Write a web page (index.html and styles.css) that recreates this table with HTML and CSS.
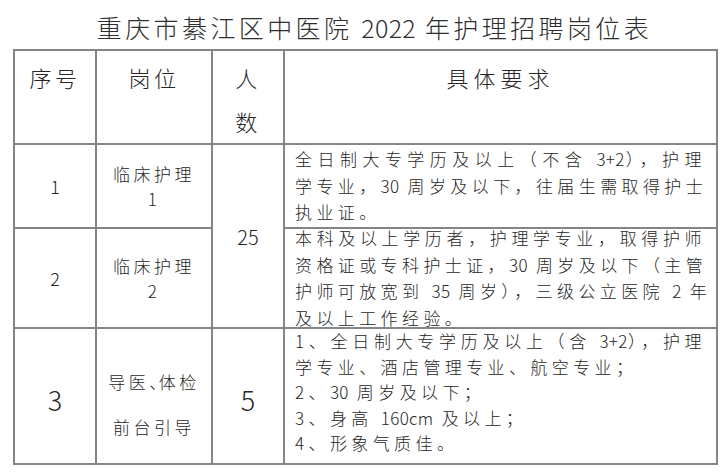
FILE: index.html
```html
<!DOCTYPE html>
<html lang="zh-CN">
<head>
<meta charset="utf-8">
<title>重庆市綦江区中医院 2022 年护理招聘岗位表</title>
<link rel="stylesheet" href="styles.css">
</head>
<body>
<h1 class="title">重庆市綦江区中医院 <span class="n">2022</span> 年护理招聘岗位表</h1>
<table class="jobs">
  <colgroup>
    <col class="c1"><col class="c2"><col class="c3"><col class="c4">
  </colgroup>
  <tr class="head">
    <th>序号</th>
    <th>岗位</th>
    <th>人<br>数</th>
    <th class="wide">具体要求</th>
  </tr>
  <tr class="r1">
    <td class="idx">1</td>
    <td class="post">临床护理<br>1</td>
    <td rowspan="2" class="count">25</td>
    <td class="req">
      <div class="box box1">
        <span class="ln">全日制大专学历及以上（不含 <span class="n">3+2</span>），护理</span>
        <span class="ln">学专业，<span class="n">30</span> 周岁及以下，往届生需取得护士</span>
        <span class="ln last">执业证。</span>
      </div>
    </td>
  </tr>
  <tr class="r2">
    <td class="idx">2</td>
    <td class="post">临床护理<br>2</td>
    <td class="req">
      <div class="box box2">
        <span class="ln">本科及以上学历者，护理学专业，取得护师</span>
        <span class="ln">资格证或专科护士证，<span class="n">30</span> 周岁及以下（主管</span>
        <span class="ln">护师可放宽到 <span class="n">35</span> 周岁），三级公立医院 <span class="n">2</span> 年</span>
        <span class="ln last">及以上工作经验。</span>
      </div>
    </td>
  </tr>
  <tr class="r3">
    <td class="idx big">3</td>
    <td class="post tall">导医<span class="dun">、</span>体检<br>前台引导</td>
    <td class="count big">5</td>
    <td class="req">
      <div class="box box3">
        <span class="ln">1、全日制大专学历及以上（含 <span class="n">3+2</span>），护理</span>
        <span class="ln last">学专业、酒店管理专业、航空专业；</span>
        <span class="ln last">2、<span class="n">30</span> 周岁及以下；</span>
        <span class="ln last">3、身高 <span class="n">160cm</span> 及以上；</span>
        <span class="ln last">4、形象气质佳。</span>
      </div>
    </td>
  </tr>
</table>
</body>
</html>
```

FILE: styles.css
```css
html, body {
  margin: 0;
  padding: 0;
  background: #ffffff;
}

body {
  font-family: "Noto Sans CJK SC", "Noto Sans", sans-serif;
  font-weight: 300;
  color: #262626;
}

.title {
  box-sizing: border-box;
  height: 49px;
  margin: 0;
  padding: 6px 0 0 24px;
  font-size: 25px;
  font-weight: 300;
  line-height: 43px;
  letter-spacing: 3.4px;
  text-align: center;
  color: #2e2e2e;
}

.n {
  letter-spacing: 0.3px;
}

.jobs {
  margin-left: 13px;
  width: 705px;
  table-layout: fixed;
  border-collapse: collapse;
}

.jobs th,
.jobs td {
  border: 2px solid #858585;
  padding: 0;
  text-align: center;
}

.c1 { width: 82px; }
.c2 { width: 116px; }
.c3 { width: 72px; }
.c4 { width: 433px; }

.head { height: 94px; }
.r1 { height: 84px; }
.r2 { height: 100px; }
.r3 { height: 136px; }

.jobs .head th {
  vertical-align: top;
  padding-top: 4px;
  font-size: 22px;
  font-weight: 300;
  line-height: 44px;
  letter-spacing: 3.5px;
}

.jobs .head .wide {
  letter-spacing: 5px;
}

.jobs .idx {
  vertical-align: middle;
  font-size: 18px;
}

.jobs .post {
  vertical-align: middle;
  font-size: 17px;
  line-height: 25px;
  letter-spacing: 3.5px;
}

.jobs .count {
  vertical-align: middle;
  font-size: 20px;
}

.jobs .big {
  font-size: 27px;
  padding-top: 6px;
}

.jobs .tall {
  line-height: 45px;
  padding-top: 16px;
}

.dun {
  font-feature-settings: "halt";
  letter-spacing: 1px;
}

.jobs .req {
  vertical-align: top;
  padding: 0 10px 0 10px;
  text-align: left;
  font-size: 17px;
}

.box {
  letter-spacing: 4.4px;
  overflow: visible;
}

.box1 {
  height: 78px;
  margin-top: 1px;
  line-height: 26.5px;
}

.box2 {
  height: 90px;
  margin-top: -4px;
  line-height: 26.5px;
}

.box3 {
  height: 126px;
  margin-top: -1px;
  line-height: 25.5px;
}

.ln {
  display: block;
  white-space: nowrap;
  text-align: justify;
  text-align-last: justify;
}

.ln.last {
  text-align-last: left;
}
```
